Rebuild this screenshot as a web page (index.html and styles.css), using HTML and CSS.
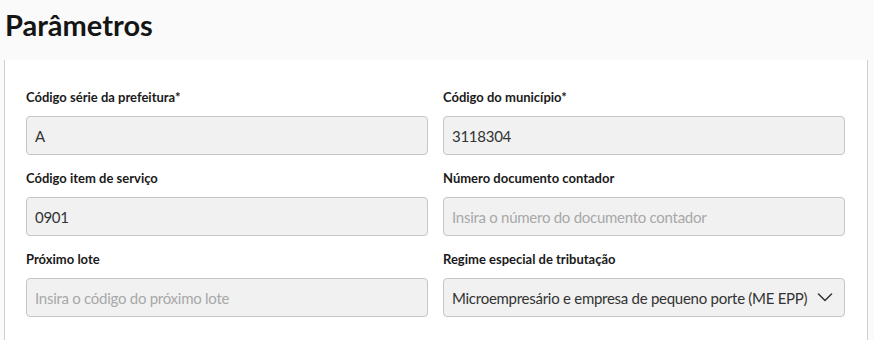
FILE: index.html
```html
<!DOCTYPE html>
<html lang="pt-BR">
<head>
<meta charset="utf-8">
<title>Parâmetros</title>
<link rel="stylesheet" href="styles.css">
</head>
<body>
<header class="page-header">
  <h1 class="page-title">Parâmetros</h1>
</header>
<section class="card">
  <div class="form-grid">
    <div class="field">
      <label class="field-label">Código série da prefeitura*</label>
      <input class="field-input" type="text" value="A">
    </div>
    <div class="field">
      <label class="field-label">Código do município*</label>
      <input class="field-input" type="text" value="3118304">
    </div>
    <div class="field">
      <label class="field-label">Código item de serviço</label>
      <input class="field-input" type="text" value="0901">
    </div>
    <div class="field">
      <label class="field-label">Número documento contador</label>
      <input class="field-input" type="text" placeholder="Insira o número do documento contador">
    </div>
    <div class="field">
      <label class="field-label">Próximo lote</label>
      <input class="field-input" type="text" placeholder="Insira o código do próximo lote">
    </div>
    <div class="field">
      <label class="field-label">Regime especial de tributação</label>
      <div class="select">
        <span class="select-value">Microempresário e empresa de pequeno porte (ME EPP)</span>
        <svg class="select-chevron" width="16" height="9" viewBox="0 0 16 9" aria-hidden="true">
          <path d="M1.5 1 L8 7.5 L14.5 1" fill="none" stroke="#333" stroke-width="1.5" stroke-linecap="round" stroke-linejoin="round"/>
        </svg>
      </div>
    </div>
  </div>
</section>
</body>
</html>
```

FILE: styles.css
```css
* { box-sizing: border-box; }

html, body {
  margin: 0;
  padding: 0;
  background: #fafafa;
  font-family: "Lato", "Open Sans", sans-serif;
  color: #222;
}

body {
  width: 874px;
  height: 340px;
  overflow: hidden;
}

.page-header {
  height: 60px;
  padding: 6px 0 0 5px;
}

.page-title {
  margin: 0;
  font-size: 29px;
  font-weight: 700;
  line-height: 38px;
  color: #151515;
}

.card {
  margin-left: 4px;
  width: 864px;
  height: 280px;
  background: #fff;
  border-left: 1px solid #cfcfcf;
  border-right: 1px solid #cfcfcf;
  padding: 28px 22px 0 21px;
}

.form-grid {
  display: grid;
  grid-template-columns: 402px 402px;
  column-gap: 15px;
  row-gap: 14px;
}

.field {
  display: flex;
  flex-direction: column;
  gap: 10px;
}

.field-label {
  font-size: 13px;
  font-weight: 700;
  line-height: 18px;
  color: #1a1a1a;
}

.field-input,
.select {
  height: 39px;
  width: 100%;
  background: #f1f1f1;
  border: 1px solid #c6c6c6;
  border-radius: 4px;
  padding: 0 8px;
  font-family: inherit;
  font-size: 15px;
  letter-spacing: -0.27px;
  color: #333;
  outline: none;
}

.field-input::placeholder {
  color: #a8a8a8;
}

.select {
  display: flex;
  align-items: center;
  gap: 8px;
  padding-right: 11px;
}

.select-value {
  white-space: nowrap;
}

.select-chevron {
  flex: none;
  margin-left: auto;
}
```
